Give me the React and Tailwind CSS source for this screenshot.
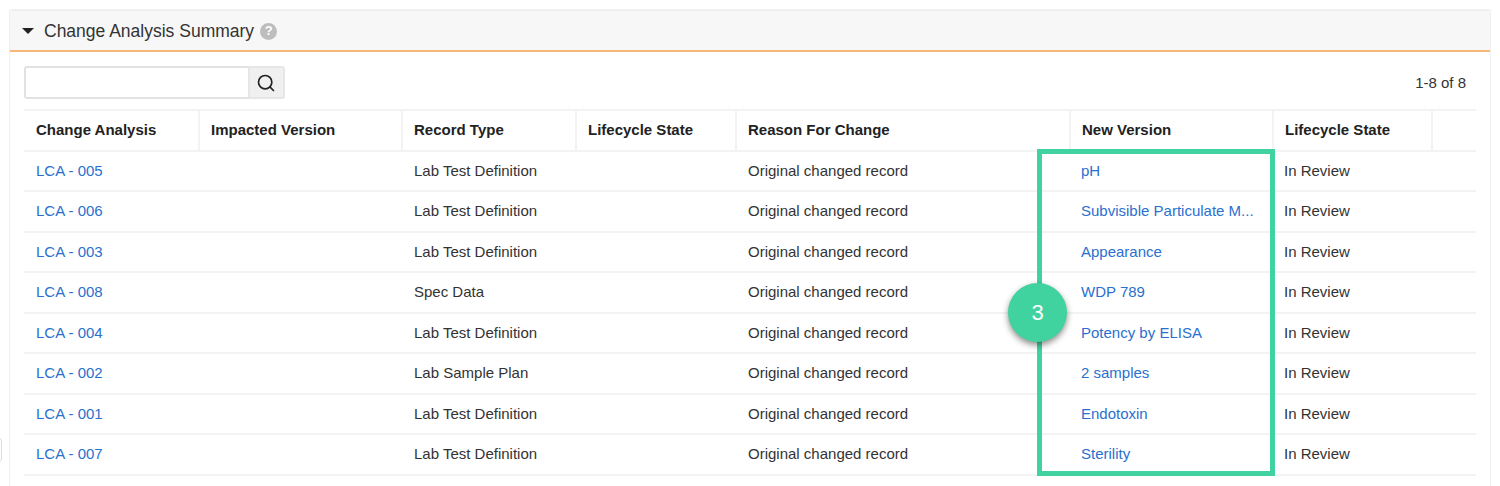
import { Search } from 'lucide-react';

const rows = [
  ['LCA - 005', 'Lab Test Definition', 'pH'],
  ['LCA - 006', 'Lab Test Definition', 'Subvisible Particulate M...'],
  ['LCA - 003', 'Lab Test Definition', 'Appearance'],
  ['LCA - 008', 'Spec Data', 'WDP 789'],
  ['LCA - 004', 'Lab Test Definition', 'Potency by ELISA'],
  ['LCA - 002', 'Lab Sample Plan', '2 samples'],
  ['LCA - 001', 'Lab Test Definition', 'Endotoxin'],
  ['LCA - 007', 'Lab Test Definition', 'Sterility'],
];

const headers = ['Change Analysis', 'Impacted Version', 'Record Type', 'Lifecycle State', 'Reason For Change', 'New Version', 'Lifecycle State', ''];
const cols = 'grid grid-cols-[176px_203px_174px_160px_334px_203px_159px_43px]';

export default function App() {
  return (
    <div className="relative h-[486px] w-[1500px] overflow-hidden bg-white pl-[9px] pt-[9px] font-['Liberation_Sans',Arial,sans-serif] text-[#333]">
      {/* Panel */}
      <div className="h-[520px] w-[1482px] rounded-t-[3px] border-x border-t-2 border-[#f0f0f0]">
        <div className="flex h-[39px] items-center bg-[#f7f7f7] pl-[12px]">
          <span className="h-0 w-0 border-x-[6px] border-t-[6px] border-x-transparent border-t-[#222]" />
          <span className="ml-[10px] pt-[1px] text-[17.5px] text-[#333]">Change Analysis Summary</span>
          <span className="ml-[6px] mt-[1px] flex h-[17px] w-[17px] items-center justify-center rounded-full bg-[#bdbdbd] text-[13px] font-bold text-white">?</span>
        </div>
        <div className="h-[2px] bg-[#f6b878]" />

        <div className="pl-[14px] pr-[14px] pt-[14px]">
          {/* Search */}
          <div className="flex h-[33px] items-center justify-between">
            <div className="flex h-[33px] w-[261px]">
              <div className="h-full w-[224px] rounded-l-[3px] border-2 border-r-0 border-[#e2e2e2] bg-white" />
              <div className="flex h-full w-[37px] items-center justify-center rounded-r-[3px] border-2 border-[#e6e6e6] bg-[#f0f0f0] pr-[2px]">
                <Search className="h-5 w-5 text-[#222]" strokeWidth={2} />
              </div>
            </div>
            <span className="pr-[10px] pt-[1px] text-[15px] text-[#333]">1-8 of 8</span>
          </div>

          {/* Table */}
          <div className="mt-[10px] w-[1452px]">
            <div className={`${cols} h-[42.6px] border-y-2 border-[#f3f3f3]`}>
              {headers.map((h, i) => (
                <div key={i} className="flex items-center border-r-2 border-[#f3f3f3] pl-[11px] text-[15px] font-bold text-[#222] first:pl-[12px] last:border-r-0">
                  {h}
                </div>
              ))}
            </div>
            {rows.map((r) => (
              <div key={r[0]} className={`${cols} h-[40.5px] items-center border-b-2 border-[#f3f3f3] text-[15px]`}>
                <a className="pl-[12px] text-[#2a70cf]">{r[0]}</a>
                <div />
                <div className="pl-[11px]">{r[1]}</div>
                <div />
                <div className="pl-[11px]">Original changed record</div>
                <a className="pl-[10px] text-[#2a70cf]">{r[2]}</a>
                <div className="pl-[10px]">In Review</div>
                <div />
              </div>
            ))}
          </div>
        </div>
      </div>

      {/* Callout annotation */}
      <div className="absolute left-[1037px] top-[149px] h-[327px] w-[238px] border-[5px] border-[#40d29f]" />
      <div className="absolute left-[1008px] top-[283px] flex h-[59px] w-[59px] items-center justify-center rounded-full bg-[#40d29f] text-[22px] text-white shadow-[0_3px_6px_rgba(0,0,0,0.45)]">
        3
      </div>

      {/* Clipped control on the left edge */}
      <div className="absolute left-[-10px] top-[438px] h-[24px] w-[12px] rounded-[3px] border border-[#ddd]" />
    </div>
  );
}
